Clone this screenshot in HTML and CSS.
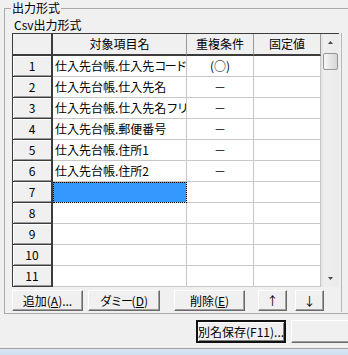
FILE: index.html
```html
<!DOCTYPE html>
<html lang="ja">
<head>
    <meta charset="UTF-8">
    <title>出力形式</title>
    <link rel="stylesheet" href="styles.css">
</head>
<body>
    <fieldset class="output-group">
        <legend>出力形式</legend>
        <div class="csv-label">Csv出力形式</div>
        <div class="grid-area">
            <div class="grid-frame">
                <table class="grid">
                    <thead>
                        <tr>
                            <th class="corner"></th>
                            <th class="col-name">対象項目名</th>
                            <th class="col-cond">重複条件</th>
                            <th class="col-fixed">固定値</th>
                        </tr>
                    </thead>
                    <tbody>
                        <tr><th class="num">1</th><td>仕入先台帳.仕入先<span class="kana">コード</span></td><td class="center">(○)</td><td></td></tr>
                        <tr><th class="num">2</th><td>仕入先台帳.仕入先名</td><td class="center">－</td><td></td></tr>
                        <tr><th class="num">3</th><td>仕入先台帳.仕入先名<span class="kana">フリガナ</span></td><td class="center">－</td><td></td></tr>
                        <tr><th class="num">4</th><td>仕入先台帳.郵便番号</td><td class="center">－</td><td></td></tr>
                        <tr><th class="num">5</th><td>仕入先台帳.住所1</td><td class="center">－</td><td></td></tr>
                        <tr><th class="num">6</th><td>仕入先台帳.住所2</td><td class="center">－</td><td></td></tr>
                        <tr><th class="num">7</th><td class="selected"></td><td></td><td></td></tr>
                        <tr><th class="num">8</th><td></td><td></td><td></td></tr>
                        <tr><th class="num">9</th><td></td><td></td><td></td></tr>
                        <tr><th class="num">10</th><td></td><td></td><td></td></tr>
                        <tr><th class="num">11</th><td></td><td></td><td></td></tr>
                    </tbody>
                </table>
                <div class="scrollbar">
                    <div class="scroll-btn">
                        <svg width="5" height="3" viewBox="0 0 5 3"><polygon points="0,3 2.5,0 5,3" fill="#4a4a4a"/></svg>
                    </div>
                    <div class="thumb"></div>
                    <div class="track"></div>
                    <div class="scroll-btn">
                        <svg width="5" height="3" viewBox="0 0 5 3"><polygon points="0,0 5,0 2.5,3" fill="#4a4a4a"/></svg>
                    </div>
                </div>
            </div>
            <div class="actions">
                <button class="btn btn-add">追加(<u>A</u>)...</button>
                <button class="btn btn-dummy"><span class="kana">ダミー</span>(<u>D</u>)</button>
                <button class="btn btn-delete">削除(<u>E</u>)</button>
                <button class="btn btn-up">↑</button>
                <button class="btn btn-down">↓</button>
            </div>
        </div>
    </fieldset>

    <div class="footer">
        <button class="btn btn-save">別名保存(F11)...</button>
        <button class="btn btn-next"></button>
    </div>

    <div class="window-edge"></div>
</body>
</html>
```

FILE: styles.css
```css
* {
    box-sizing: border-box;
}

html, body {
    margin: 0;
    padding: 0;
}

body {
    width: 348px;
    height: 355px;
    overflow: hidden;
    background-color: #f0f0f0;
    color: #000;
    font-family: "Noto Sans CJK JP", "Noto Sans CJK SC", sans-serif;
    font-size: 12px;
    line-height: 14px;
}

/* katakana is proportional in the original UI font */
.kana {
    letter-spacing: -1.5px;
}

/* group box */
.output-group {
    margin: 1px -40px 0 4px;
    padding: 0 0 1px 0;
    border: 1px solid #a9a9a9;
    min-width: 0;
}

.output-group legend {
    margin-left: 6px;
    padding: 0 1px;
    line-height: 14px;
}

.csv-label {
    margin: 3px 0 1px 9px;
}

.grid-area {
    width: 330px;
    margin-left: 7px;
    padding-bottom: 1px;
    border-right: 1px solid #b9b9b9;
}

/* grid */
.grid-frame {
    display: flex;
    width: 327px;
    border-top: 1px solid #3c3c3c;
    border-left: 1px solid #3c3c3c;
}

.grid {
    width: 308px;
    table-layout: fixed;
    border-collapse: separate;
    border-spacing: 0;
}

.grid th,
.grid td {
    height: 21px;
    padding: 0;
    font-weight: normal;
    white-space: nowrap;
    overflow: hidden;
}

.grid thead th {
    height: 22px;
    background-color: #f0f0f0;
    text-align: center;
    border-right: 1px solid #9a9a9a;
    border-bottom: 2px solid #3c3c3c;
}

.grid thead th.corner {
    width: 40px;
    border-right: 2px solid #3c3c3c;
}

.col-name { width: 134px; }
.col-cond { width: 67px; }
.col-fixed { width: 67px; }

.grid th.num {
    background-color: #f0f0f0;
    text-align: center;
    border-right: 2px solid #3c3c3c;
    border-bottom: 1px solid #3c3c3c;
    box-shadow: inset 1px 1px #fff, inset 0 -1px #9a9a9a;
}

.grid td {
    background-color: #fff;
    padding-left: 2px;
    border-right: 1px solid #c8c8c8;
    border-bottom: 1px solid #c8c8c8;
}

.grid td.center {
    padding-left: 0;
    text-align: center;
}

.grid td.selected {
    background-color: #3399ff;
    outline: 1px dotted #000;
    outline-offset: -1px;
}

/* scrollbar */
.scrollbar {
    width: 18px;
    display: flex;
    flex-direction: column;
    align-items: center;
    background: linear-gradient(to right, #e2e2e2, #efefef 3px, #ebebeb);
}

.scroll-btn {
    width: 100%;
    height: 17px;
    display: flex;
    align-items: center;
    justify-content: center;
}

.scroll-btn svg {
    display: block;
}

.thumb {
    width: 15px;
    height: 17px;
    margin-top: 2px;
    border: 1px solid #979797;
    border-radius: 2px;
    background: linear-gradient(to right, #f6f6f6, #e6e6e6 50%, #d6d6d6);
}

.track {
    flex: 1;
}

/* buttons */
.btn {
    height: 21px;
    padding: 0;
    background-color: #f0f0f0;
    color: #000;
    font: inherit;
    white-space: nowrap;
    border: 1px solid;
    border-color: #fff #696969 #696969 #fff;
    box-shadow: inset -1px -1px #a0a0a0;
    display: flex;
    align-items: center;
    justify-content: center;
}

.actions {
    display: flex;
    margin-top: 3px;
}

.btn-add { width: 71px; }
.btn-dummy { width: 72px; margin-left: 5px; }
.btn-delete { width: 71px; margin-left: 14px; }
.btn-up { width: 29px; margin-left: 13px; }
.btn-down { width: 29px; margin-left: 8px; }

.footer {
    display: flex;
    margin-top: 6px;
    padding-left: 196px;
}

.btn-save {
    width: 117px;
    height: 23px;
    border: 2px solid #111;
    box-shadow: inset 1px 1px #fff, inset -1px -1px #808080;
}

.btn-next {
    flex: none;
    width: 60px;
    height: 23px;
    margin-left: 5px;
}

.window-edge {
    height: 12px;
    margin-top: 5px;
    border-top: 1px solid #a0a0a0;
    background: linear-gradient(#dbe7f4, #c3d6ec);
}
```
